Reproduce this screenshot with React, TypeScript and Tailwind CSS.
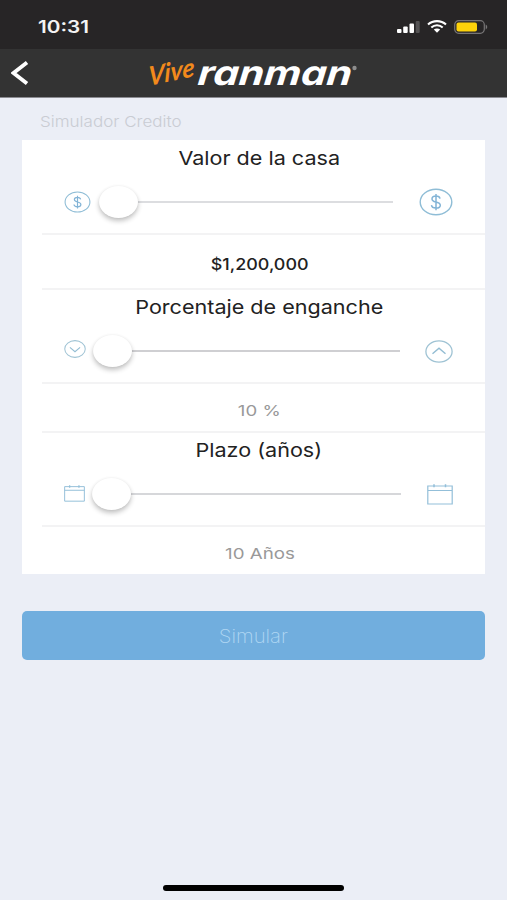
import React, { useState } from 'react';

type IconProps = { className?: string };

function DollarIcon({ className }: IconProps) {
  return (
    <svg viewBox="0 0 34 28" fill="none" className={className}>
      <ellipse cx="17" cy="14" rx="15.8" ry="12.8" stroke="#8fbdd6" strokeWidth="1.4" />
      <path
        d="M21 10.6c-.3-1.7-1.8-2.6-4-2.6-2.3 0-4 1.1-4 2.9 0 1.8 1.5 2.5 4 3.1s4.3 1.2 4.3 3.2c0 1.8-1.8 2.9-4.3 2.9s-4.3-1-4.5-2.9M17 6v16.2"
        stroke="#83b4d6"
        strokeWidth="1.5"
      />
    </svg>
  );
}

function CircleArrowIcon({ className, up = false }: IconProps & { up?: boolean }) {
  return (
    <svg viewBox="0 0 28 23" fill="none" className={className}>
      <ellipse cx="14" cy="11.5" rx="13.1" ry="10.7" stroke="#9fc3d4" strokeWidth="1.3" />
      <path d={up ? 'M7.5 13.8 14 8.2l6.5 5.6' : 'M7.5 9.4 14 15l6.5-5.6'} stroke="#93bdd3" strokeWidth="1.4" />
    </svg>
  );
}

function CalendarIcon({ className }: IconProps) {
  return (
    <svg viewBox="0 0 26 21" fill="none" className={className}>
      <path d="M.8 2h24.4v18H.8zM.8 6.5h24.4" stroke="#93bfd9" strokeWidth="1.2" />
      <path d="M7 .3v3M18.5.3v3" stroke="#93bfd9" strokeWidth="1.5" />
    </svg>
  );
}

interface SliderRowProps {
  title: string;
  value: number;
  trackClass: string;
  lineClass: string;
  low: React.ReactNode;
  high: React.ReactNode;
}

function SliderRow({ title, value, trackClass, lineClass, low, high }: SliderRowProps) {
  return (
    <div className="ml-[20px] h-[94px] border-b-2 border-[#f3f3f4] pr-[32px] pl-[22px]">
      <h2 className="flex h-[35px] items-center justify-center pt-px pl-px text-[19px] text-[#222]">
        <span className="scale-x-[1.135] whitespace-nowrap">{title}</span>
      </h2>
      <div className="flex h-[52px] items-center">
        {low}
        <div className={`relative flex h-[32px] items-center ${trackClass}`}>
          <div className={`h-[2px] w-full ${lineClass}`} />
          <div
            className="absolute top-0 h-[32px] w-[39px] rounded-[50%] bg-white shadow-[0_3px_5px_rgba(0,0,0,0.24),0_0_3px_rgba(0,0,0,0.05)]"
            style={{ left: `${value}%` }}
          />
        </div>
        <div className="ml-auto">{high}</div>
      </div>
    </div>
  );
}

function StatusBar() {
  return (
    <div className="flex h-[49px] items-center justify-between bg-[#272526] pr-[19px] pl-[38px] pt-[4px]">
      <span className="mt-[2px] origin-left scale-x-[1.22] text-[17px] font-semibold text-[#f4f4f4]">10:31</span>
      <div className="flex items-center gap-[7px]">
        <svg viewBox="0 0 24 12" className="h-[12px] w-[24px]">
          <rect x="1" y="8" width="4.5" height="4" rx="1" fill="#fff" />
          <rect x="7.2" y="5.5" width="4.5" height="6.5" rx="1" fill="#fff" />
          <rect x="13.5" y="2.5" width="4.5" height="9.5" rx="1" fill="#fff" />
          <rect x="19.7" y="0" width="4" height="12" rx="1" fill="#555354" />
        </svg>
        <svg viewBox="0 0 20 13" fill="none" className="h-[13px] w-[20px]">
          <path d="M1 4.5c5-4.5 13-4.5 18 0M4.3 7.500c3.300-3 8.100-3 11.400 0" stroke="#fff" strokeWidth="2.1" />
          <path d="m6.8 9.6 3.2 3.2 3.2-3.2c-1.7-1.5-4.7-1.5-6.4 0Z" fill="#fff" />
        </svg>
        <svg viewBox="0 0 34 14" fill="none" className="h-[14px] w-[34px]">
          <rect x="0.7" y="0.7" width="29.6" height="12.6" rx="4" stroke="#777576" strokeWidth="1.2" />
          <rect x="2.5" y="2.5" width="20.5" height="9" rx="2" fill="#fdd20a" />
          <path d="M31.7 4.6c2 .7 2 4.1 0 4.8Z" fill="#777576" />
        </svg>
      </div>
    </div>
  );
}

function NavBar() {
  return (
    <header className="relative flex h-[49px] items-center border-b border-[#8b8b91] bg-[#333] pl-[11px]">
      <button aria-label="Volver">
        <svg viewBox="0 0 18 24" fill="none" className="h-[24px] w-[18px]">
          <path d="M16 1.5 2.5 12 16 22.5" stroke="#fff" strokeWidth="3.8" />
        </svg>
      </button>
      <svg viewBox="0 0 230 48" className="absolute top-0 left-[137px] h-[48px] w-[230px] overflow-visible">
        <g transform="translate(11.5 37) rotate(-12) skewX(-12)">
          <text
            textLength="47"
            lengthAdjust="spacingAndGlyphs"
            fill="#f28a1c"
            fontFamily="Lato, sans-serif"
            fontStyle="italic"
            fontWeight="700"
            fontSize="26"
          >
            Vive
          </text>
        </g>
        <g transform="translate(60 35.5) skewX(-6)">
          <text
            textLength="154"
            lengthAdjust="spacingAndGlyphs"
            fill="#fff"
            fontFamily="Inter, sans-serif"
            fontStyle="italic"
            fontWeight="700"
            fontSize="34"
          >
            ranman
          </text>
        </g>
        <circle cx="217.500" cy="19" r="2.2" fill="#8d8d8d" />
      </svg>
    </header>
  );
}

export default function App() {
  const [price] = useState(1200000);
  const [percent] = useState(10);
  const [years] = useState(10);

  return (
    <div className="flex h-[900px] w-[507px] flex-col overflow-hidden bg-[#ebeef6] font-['Inter',sans-serif]">
      <StatusBar />
      <NavBar />

      <main className="flex-1 px-[22px]">
        <p className="flex h-[42px] items-center pt-[6px] pl-[18px] text-[15px] font-light text-[#c9ccd3]">
          <span className="origin-left scale-x-[1.135]">Simulador Credito</span>
        </p>

        <section className="h-[434px] w-[463px] bg-white pt-px">
          <SliderRow
            title="Valor de la casa"
            value={0}
            trackClass="ml-[8px] w-[294px]"
            lineClass="bg-[#dcdde0]"
            low={<DollarIcon className="h-[22px] w-[27px]" />}
            high={<DollarIcon className="h-[28px] w-[34px]" />}
          />
          <div className="ml-[20px] flex h-[55px] items-center justify-center border-b-2 border-[#f3f3f4] pt-[5px] pr-[7px] text-[16px] font-medium text-[#222]">
            <span className="scale-x-[1.12]">${price.toLocaleString('en-US')}</span>
          </div>

          <SliderRow
            title="Porcentaje de enganche"
            value={0}
            trackClass="ml-[7px] w-[307px]"
            lineClass="bg-[#cfcfd2]"
            low={<CircleArrowIcon className="h-[18px] w-[22px] -translate-y-[2px]" />}
            high={<CircleArrowIcon up className="h-[23px] w-[28px]" />}
          />
          <div className="ml-[20px] flex h-[49px] items-center justify-center border-b-2 border-[#f3f3f4] pt-[7px] pr-[8px] text-[15px] text-[#999]">
            <span className="scale-x-[1.24]">{percent} %</span>
          </div>

          <SliderRow
            title="Plazo (años)"
            value={0}
            trackClass="ml-[7px] w-[309px]"
            lineClass="bg-[#d6d7da]"
            low={<CalendarIcon className="h-[17px] w-[21px] -translate-y-[1px]" />}
            high={<CalendarIcon className="h-[21px] w-[26px]" />}
          />
          <div className="ml-[20px] flex h-[48px] items-center justify-center pt-[6px] pr-[8px] text-[15px] text-[#999]">
            <span className="scale-x-[1.25]">{years} Años</span>
          </div>
        </section>

        <button className="mt-[37px] flex h-[49px] w-[463px] items-center justify-center rounded-[5px] bg-[#71aede] pt-[3px] text-[19px] font-extralight text-[#b0d7f3]">
          <span className="scale-x-[1.07]">Simular</span>
        </button>
      </main>

      <div className="mb-[9px] ml-[163px] h-[6px] w-[181px] rounded-full bg-black" />
    </div>
  );
}
